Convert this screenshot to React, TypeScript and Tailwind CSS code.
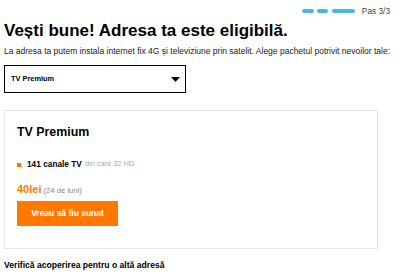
import React from "react";

export default function App() {
  return (
    <div className="w-[400px] h-[280px] bg-white font-['Liberation_Sans',Arial,sans-serif] text-black px-[4px] overflow-hidden">
      <div className="flex justify-end items-center gap-[7px] pr-[6px] pt-[2px] h-[20px]">
        <div className="flex items-center">
          <div className="w-[12px] h-[4px] rounded-full bg-[#4bb4e6]" />
          <div className="ml-[3px] w-[11px] h-[4px] rounded-full bg-[#4bb4e6]" />
          <div className="ml-[4px] w-[23px] h-[4px] rounded-full bg-[#4bb4e6]" />
        </div>
        <span className="text-[8.3px] leading-[12px] text-[#444]">Pas 3/3</span>
      </div>
      <h1 className="text-[17px] leading-[22px] font-bold">
        Vești bune! Adresa ta este eligibilă.
      </h1>
      <p className="mt-[3px] text-[8.5px] leading-[12px] text-[#222] whitespace-nowrap">
        La adresa ta putem instala internet fix 4G și televiziune prin satelit. Alege pachetul potrivit nevoilor tale:
      </p>
      <div className="mt-[8px] w-[182px] h-[28px] border border-black flex items-center justify-between pl-[6px] pr-[5px]">
        <span className="text-[7.4px] font-bold">TV Premium</span>
        <svg width="9" height="5" viewBox="0 0 9 5">
          <path d="M0 0H9L4.5 5Z" fill="#000" />
        </svg>
      </div>
      <div className="mt-[17px] w-[374px] border border-[#e6e6e6] pl-[12px] pt-[13px] pb-[22px]">
        <div className="text-[12.4px] leading-[16px] font-bold">TV Premium</div>
        <div className="mt-[18px] flex items-center h-[12px]">
          <div className="w-[4px] h-[4px] bg-[#ff7900] mt-[1px]" />
          <span className="ml-[6px] text-[8.3px] leading-[12px] font-bold">141 canale TV</span>
          <span className="ml-[3px] text-[7.4px] leading-[12px] text-[#aaa]">din care 32 HD</span>
        </div>
        <div className="mt-[12px] h-[14px] flex items-baseline">
          <span className="text-[11px] leading-[14px] font-bold text-[#ff7900]">40lei</span>
          <span className="ml-[2px] text-[7.7px] text-[#888]">(24 de luni)</span>
        </div>
        <button className="mt-[5px] w-[101px] h-[25px] bg-[#ff7900] text-white text-[8.5px] font-bold flex items-center justify-center">
          Vreau să fiu sunat
        </button>
      </div>
      <div className="mt-[10px] text-[8.6px] leading-[12px] font-bold">
        Verifică acoperirea pentru o altă adresă
      </div>
    </div>
  );
}
